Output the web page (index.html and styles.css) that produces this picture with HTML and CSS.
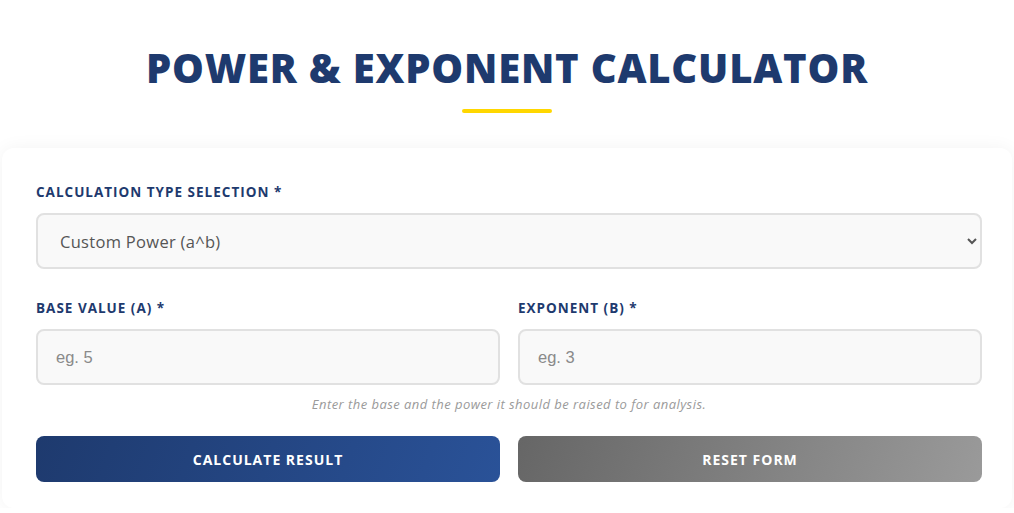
FILE: index.html
```html
<!DOCTYPE html>
<html lang="en">

<head>
    <meta charset="UTF-8">
    <title>Power &amp; Exponent Calculator</title>
    <link rel="stylesheet" href="styles.css">
</head>

<body>
    <div class="calc-wrap">
        <header class="calc-header">
            <h1>Power &amp; Exponent Calculator</h1>
            <span class="title-bar"></span>
        </header>
        <form class="calc-card">
            <div class="field">
                <label for="calc-type">Calculation Type Selection *</label>
                <select id="calc-type" class="control">
                    <option>Custom Power (a^b)</option>
                    <option>Square (a^2)</option>
                    <option>Cube (a^3)</option>
                </select>
            </div>
            <div class="field-row">
                <div class="field">
                    <label for="base">Base Value (a) *</label>
                    <input id="base" class="control" type="number" placeholder="eg. 5">
                </div>
                <div class="field">
                    <label for="exponent">Exponent (b) *</label>
                    <input id="exponent" class="control" type="number" placeholder="eg. 3">
                </div>
            </div>
            <p class="hint">Enter the base and the power it should be raised to for analysis.</p>
            <div class="btn-row">
                <button type="button" class="btn btn-primary">Calculate Result</button>
                <button type="reset" class="btn btn-reset">Reset Form</button>
            </div>
        </form>
    </div>
</body>

</html>
```

FILE: styles.css
```css
* {
    box-sizing: border-box;
}

body {
    margin: 0;
    background: #fff;
    font-family: "Open Sans", "Liberation Sans", sans-serif;
    color: #1e3a6e;
}

.calc-wrap {
    margin: 0 2px;
}

/*标题*/
.calc-header {
    text-align: center;
    padding-top: 42px;
}

.calc-header h1 {
    margin: 0;
    font-size: 40px;
    font-weight: 800;
    letter-spacing: 0.8px;
    line-height: 52px;
    text-transform: uppercase;
    color: #1e3a6e;
}

.title-bar {
    display: block;
    width: 90px;
    height: 4px;
    margin: 15px auto 0;
    border-radius: 2px;
    background: #ffd700;
}

/*表单卡片*/
.calc-card {
    margin-top: 35px;
    padding: 34px 30px 26px 34px;
    background: #fff;
    border-radius: 12px;
    box-shadow: 0 0 18px rgba(0, 0, 0, 0.05);
}

.field {
    display: flex;
    flex-direction: column;
}

.field label {
    font-size: 13.5px;
    font-weight: 700;
    letter-spacing: 1px;
    text-transform: uppercase;
    line-height: 21px;
    margin-bottom: 10px;
}

.control {
    height: 56px;
    width: 100%;
    padding: 0 18px;
    border: 2px solid #e1e1e1;
    border-radius: 8px;
    background-color: #f9f9f9;
    font-family: "Open Sans", "Liberation Sans", sans-serif;
    font-size: 16.5px;
    letter-spacing: 0.3px;
    color: #555;
}

input.control {
    font-family: "Liberation Sans", Arial, sans-serif;
    letter-spacing: 0;
}

input.control::placeholder {
    color: #8a8a8a;
}

.field-row {
    display: grid;
    grid-template-columns: 1fr 1fr;
    gap: 18px;
    margin-top: 29px;
}

.hint {
    margin: 10px 0 0;
    text-align: center;
    font-size: 13px;
    font-style: italic;
    letter-spacing: 0.45px;
    line-height: 18px;
    color: #9a9a9a;
}

.btn-row {
    display: grid;
    grid-template-columns: 1fr 1fr;
    gap: 18px;
    margin-top: 23px;
}

.btn {
    height: 46px;
    border: 0;
    border-radius: 8px;
    font-family: "Open Sans", "Liberation Sans", sans-serif;
    font-size: 14px;
    font-weight: 700;
    letter-spacing: 1px;
    text-transform: uppercase;
    color: #fff;
    cursor: pointer;
}

.btn-primary {
    background: linear-gradient(110deg, #1e3a6e, #2a5298);
}

.btn-reset {
    background: linear-gradient(110deg, #666, #9a9a9a);
}
```
